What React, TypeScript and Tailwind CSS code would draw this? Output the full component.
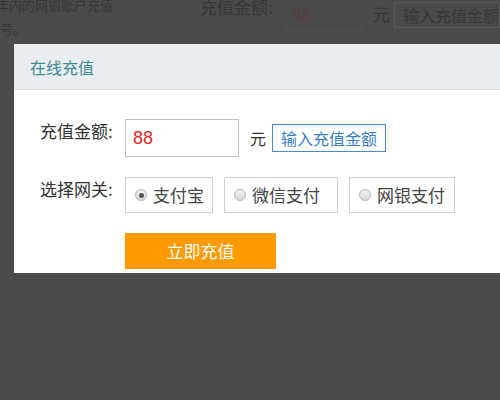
import { useState } from 'react';

const gateways = [
  { id: 'alipay', label: '支付宝', width: 'w-[88px]' },
  { id: 'wechat', label: '微信支付', width: 'w-[114px]' },
  { id: 'bank', label: '网银支付', width: 'w-[106px]' },
];

function Radio({ checked }: { checked: boolean }) {
  return (
    <span className="w-[12px] h-[12px] rounded-full border border-[#b4b4b4] bg-gradient-to-b from-[#f4f4f4] to-[#d8d8d8] flex items-center justify-center shrink-0">
      {checked && <span className="w-[5px] h-[5px] rounded-full bg-[#555]" />}
    </span>
  );
}

export default function App() {
  const [gateway, setGateway] = useState('alipay');
  const [amount, setAmount] = useState('88');

  return (
    <div
      className="relative w-[500px] h-[400px] overflow-hidden bg-[#4b4b4b]"
      style={{ fontFamily: '"Noto Sans CJK SC", "Noto Sans", sans-serif' }}
    >
      {/* page behind the overlay */}
      <div className="flex -mt-[4px] text-[17px] text-[#363636] select-none">
        <div className="w-[200px] shrink-0 text-[13px] leading-[18px]">
          <div className="-ml-[4px] whitespace-nowrap">年内的网银账户充值</div>
          <div className="mt-[6px]">号。</div>
        </div>
        <div className="leading-[22px] whitespace-nowrap">充值金额:</div>
        <div className="ml-[12px] w-[114px] h-[36px] border border-[#505050] px-[6px] text-[18px] leading-[32px] text-[#5e3c3c]">88</div>
        <div className="ml-[10px] leading-[36px]">元</div>
        <div className="ml-[4px] mt-[6px] h-[26px] pl-[8px] border border-[#595959] text-[16px] leading-[24px] whitespace-nowrap">输入充值金额</div>
      </div>

      {/* dialog */}
      <div className="absolute left-[14px] top-[44px] w-[520px] bg-white">
        <div className="h-[46px] bg-[#e9edf0] border-b border-[#dfe3e6] pl-[16px] flex items-center text-[16px] text-[#3f8a96]">
          在线充值
        </div>
        <div className="pt-[29px] pb-[4px] flex flex-col gap-[20px] text-[#333]">
          <div className="flex items-start">
            <div className="w-[111px] pl-[26px] text-[17px] leading-[24px]">充值金额:</div>
            <div className="flex items-center">
              <input
                value={amount}
                onChange={(e) => setAmount(e.target.value)}
                className="w-[114px] h-[38px] border border-[#c2c2c2] pl-[7px] text-[18px] text-[#e02a2a] outline-none"
                style={{ fontFamily: 'Arial, "Liberation Sans", sans-serif' }}
              />
              <span className="ml-[11px] text-[16px] leading-[24px]">元</span>
              <button className="ml-[6px] h-[28px] px-[8px] border border-[#4a8ad0] text-[16px] leading-[26px] text-[#3a7ec4] bg-white">
                输入充值金额
              </button>
            </div>
          </div>

          <div className="flex items-start">
            <div className="w-[111px] pl-[26px] text-[17px] leading-[24px]">选择网关:</div>
            <div className="flex gap-[11px]">
              {gateways.map((g) => (
                <label
                  key={g.id}
                  onClick={() => setGateway(g.id)}
                  className={`${g.width} h-[36px] border border-[#d0d0d0] pl-[9px] flex items-center gap-[6px] text-[17px] text-[#444] cursor-pointer`}
                >
                  <Radio checked={gateway === g.id} />
                  {g.label}
                </label>
              ))}
            </div>
          </div>

          <div className="flex">
            <div className="w-[111px]" />
            <button className="w-[151px] h-[36px] bg-[#ff9a00] text-white text-[17px]">立即充值</button>
          </div>
        </div>
      </div>
    </div>
  );
}
